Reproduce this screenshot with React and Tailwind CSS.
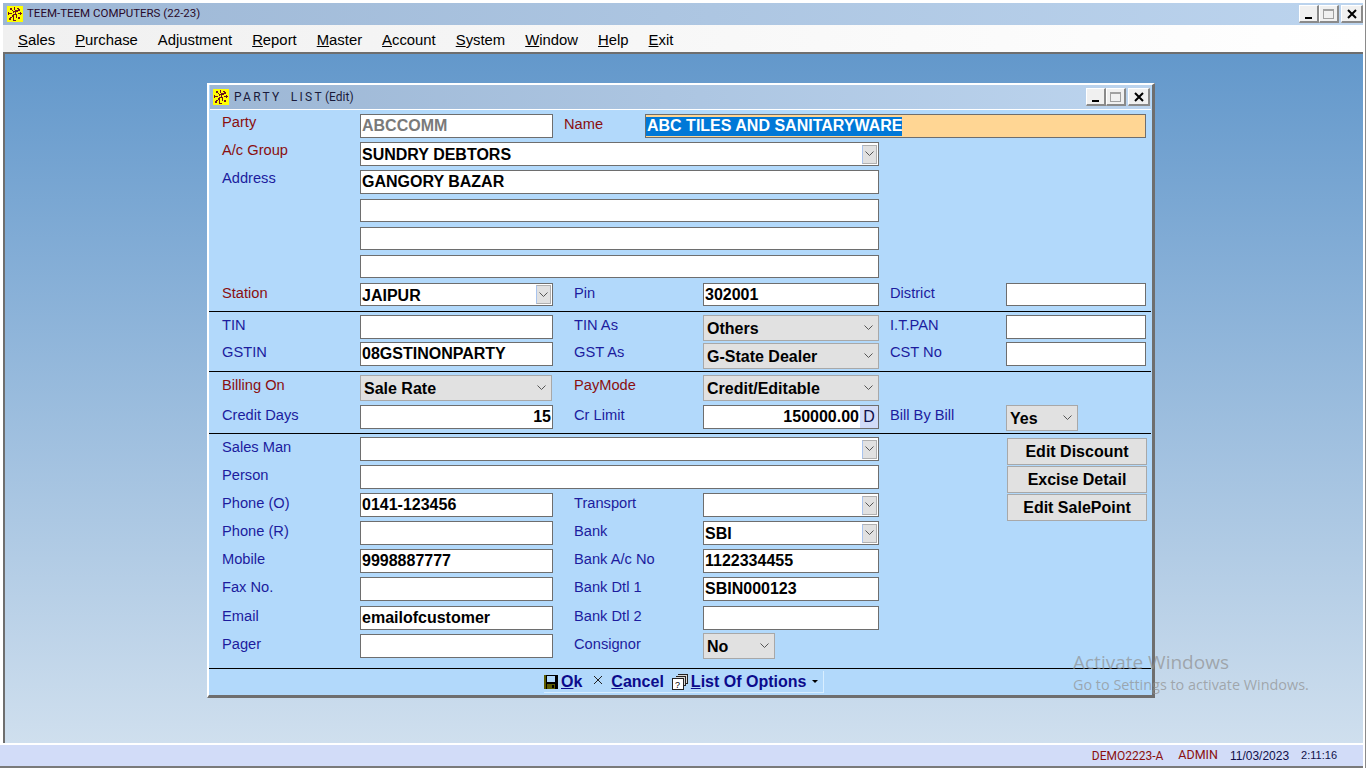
const MENUS = [
  ["S", "ales"], ["P", "urchase"], ["", "Adjustment"], ["R", "eport"], ["M", "aster"],
  ["A", "ccount"], ["S", "ystem"], ["W", "indow"], ["H", "elp"], ["E", "xit"],
];

const BLUE = "text-[#1c1c9e]";
const RED = "text-[#8a0f0f]";

function AppIcon() {
  return (
    <svg width="16" height="16" viewBox="0 0 16 16" className="shrink-0" shapeRendering="crispEdges">
      <rect width="16" height="16" fill="#ffff00" />
      <path
        d="M7 1h1v3H7zM3 2h2v2H3zM10 2h2v1h-2zM11 3h2v2h-2zM5 4h1v1H5zM8 4h3v1H8zM6 5h1v2H6zM9 5h2v1H9zM1 7h4v1H1zM1 6h1v3H1zM11 7h4v1h-4zM13 6h1v3h-1zM6 8h4v1H6zM5 9h2v2H5zM9 9h1v3H9zM3 11h2v1H3zM2 12h2v2H2zM6 11h1v4H6zM11 11h2v2h-2zM7 14h2v1H7zM7 5h2v1H7zM8 6h1v2H8z"
        fill="#6b1020"
      />
    </svg>
  );
}

function WinButtons() {
  return (
    <div className="flex items-center">
      <div className="w-[20px] h-[18px] bg-[#f0f0f0] border-t border-l border-white border-r-2 border-b-2 border-r-[#8a8a8a] border-b-[#8a8a8a] flex items-end justify-center pb-[2px]">
        <div className="w-[7px] h-[2px] bg-black" />
      </div>
      <div className="w-[20px] h-[18px] bg-[#f0f0f0] border-t border-l border-white border-r-2 border-b-2 border-r-[#8a8a8a] border-b-[#8a8a8a] flex items-center justify-center">
        <div className="w-[11px] h-[10px] border border-[#a0a0a0] border-t-2" />
      </div>
      <div className="ml-[2px] w-[22px] h-[18px] bg-[#f0f0f0] border-t border-l border-white border-r-2 border-b-2 border-r-[#8a8a8a] border-b-[#8a8a8a] flex items-center justify-center">
        <svg width="10" height="10" viewBox="0 0 10 10">
          <path d="M1 1l8 8M9 1l-8 8" stroke="#000" strokeWidth="2" fill="none" />
        </svg>
      </div>
    </div>
  );
}

function Label({ text, red, w, top = "mt-[2px]" }) {
  return (
    <div className={`text-[14.67px] leading-[16px] self-start ${top} ${red ? RED : BLUE} ${w}`}>{text}</div>
  );
}

function Input({ value, w, right, grey }) {
  return (
    <div
      className={`h-full flex items-center border border-[#6e6e6e] bg-white text-[16px] font-bold px-[1px] leading-none whitespace-nowrap ${w} ${right ? "justify-end" : ""} ${grey ? "text-[#7a7a7a]" : "text-black"}`}
    >
      {value}
    </div>
  );
}

function Chevron() {
  return (
    <svg width="9" height="6" viewBox="0 0 9 6" className="shrink-0">
      <path d="M0.5 0.5l4 4 4-4" stroke="#555" strokeWidth="1" fill="none" />
    </svg>
  );
}

// white editable combo with the small button on its right
function Combo({ value, w }) {
  return (
    <div className={`h-full flex items-center justify-between border border-[#6e6e6e] bg-white text-[16px] font-bold pl-[1px] pr-[1px] whitespace-nowrap ${w}`}>
      <span className="block mt-[2px]">{value}</span>
      <div className="w-[15px] h-[19px] bg-[#e1e1e1] border border-[#b0b0b0] border-l-[#a9c4ee] flex items-center justify-center">
        <Chevron />
      </div>
    </div>
  );
}

// grey drop-down list
function Select({ value, w, mt = "" }) {
  return (
    <div className={`h-[26px] flex items-center justify-between border border-[#a8a8a8] bg-[#e1e1e1] text-[16px] font-bold pl-[3px] pr-[5px] whitespace-nowrap ${w} ${mt}`}>
      <span className="block mt-[2px]">{value}</span>
      <Chevron />
    </div>
  );
}

function Row({ h = "h-[24px]", mb = "mb-[4px]", children }) {
  return <div className={`flex ${h} ${mb}`}>{children}</div>;
}

function Rule() {
  return <div className="h-[1px] bg-black mr-[1px]" />;
}

function SideButton({ text }) {
  return (
    <div className="w-[140px] h-[27px] mb-[1px] border border-[#a8a8a8] bg-[#e1e1e1] text-[16px] font-bold flex items-center justify-center">
      {text}
    </div>
  );
}

function Tool({ icon, first, rest, ml = "" }) {
  return (
    <div className={`flex items-center ${ml}`}>
      {icon}
      <span className="text-[16px] font-bold text-[#0b0b8c] ml-[3px]">
        <span className="underline">{first}</span>
        {rest}
      </span>
    </div>
  );
}

const L1 = "w-[138px]";
const L2 = "w-[129px]";
const L3 = "w-[116px]";
const GAP = "w-[21px]";
const GAP2 = "w-[11px]";

export default function App() {
  return (
    <div className="w-[1366px] h-[768px] relative overflow-hidden flex flex-col bg-white border-r border-r-[#8a8a8a] font-['Liberation_Sans',Arial,sans-serif] text-black">
      {/* main title bar */}
      <div className="mt-[3px] ml-[3px] mr-[2px] h-[22px] flex items-center justify-between pl-[4px] bg-gradient-to-r from-[#9db7d5] to-[#bcd4ee]">
        <div className="flex items-center gap-[4px] text-[11.5px] font-['Roboto',sans-serif] text-[#2a0a2a]">
          <AppIcon />
          <span>TEEM-TEEM COMPUTERS (22-23)</span>
        </div>
        <WinButtons />
      </div>

      {/* menu */}
      <div className="h-[27px] ml-[3px] mr-[2px] flex items-center pt-[3px] pl-[15px] gap-[20px] bg-gradient-to-r from-[#f0f0f0] to-white text-[14.85px]">
        {MENUS.map(([u, rest], i) => (
          <span key={i}>
            <span className="underline">{u}</span>
            {rest}
          </span>
        ))}
      </div>

      {/* desktop */}
      <div className="flex-1 mr-[2px] ml-[3px] border-t-2 border-l-2 border-[#6e6e6e] pt-[29px] pl-[202px] bg-gradient-to-b from-[#6398cb] to-[#cfdfee]">
        <div className="w-[948px] h-[615px] border-t-[2px] border-l-[2px] border-white border-r-[3px] border-b-[3px] border-r-[#6e6e6e] border-b-[#6e6e6e] flex flex-col bg-[#b2d9fb]">
          <div className="mx-[1px] h-[25px] flex items-center justify-between pl-[3px] pr-[1px] bg-gradient-to-r from-[#9db7d5] to-[#bcd4ee] border-b border-white">
            <div className="flex items-center font-['Roboto',sans-serif] text-[#1a1a3a]">
              <AppIcon />
              <span className="ml-[5px] text-[12px] tracking-[2.3px] [word-spacing:4px]">PARTY LIST</span>
              <span className="ml-[1px] text-[12px]">(Edit)</span>
            </div>
            <WinButtons />
          </div>

          <div className="pl-[13px] pt-[4px] flex-1 flex flex-col">
            <Row>
              <Label text="Party" red w={L1} top="" />
              <Input value="ABCCOMM" w="w-[193px]" grey />
              <div className="w-[11px]" />
              <Label text="Name" red w="w-[81px]" />
              <div className="h-full w-[501px] border border-[#6e6e6e] bg-[#ffd694] flex items-center text-[16px] font-bold whitespace-nowrap">
                <span className="bg-[#0078d7] text-white h-[19px] leading-[18px] pl-[1px]">ABC TILES AND SANITARYWARE</span>
              </div>
            </Row>
            <Row>
              <Label text="A/c Group" red w={L1} top="" />
              <Combo value="SUNDRY DEBTORS" w="w-[519px]" />
            </Row>
            <Row h="h-[24px]" mb="mb-[5px]">
              <Label text="Address" w={L1} top="" />
              <Input value="GANGORY BAZAR" w="w-[519px]" />
            </Row>
            <Row h="h-[23px]" mb="mb-[5px]">
              <div className={L1} />
              <Input value="" w="w-[519px]" />
            </Row>
            <Row h="h-[23px]" mb="mb-[5px]">
              <div className={L1} />
              <Input value="" w="w-[519px]" />
            </Row>
            <Row h="h-[23px]" mb="mb-[5px]">
              <div className={L1} />
              <Input value="" w="w-[519px]" />
            </Row>
            <Row h="h-[23px]" mb="mb-[5px]">
              <Label text="Station" red w={L1} />
              <Combo value="JAIPUR" w="w-[193px]" />
              <div className={GAP} />
              <Label text="Pin" w={L2} />
              <Input value="302001" w="w-[176px]" />
              <div className={GAP2} />
              <Label text="District" w={L3} />
              <Input value="" w="w-[140px]" />
            </Row>
            <div className="-ml-[13px] mb-[3px]"><Rule /></div>

            <Row mb="mb-[3px]">
              <Label text="TIN" w={L1} />
              <Input value="" w="w-[193px]" />
              <div className={GAP} />
              <Label text="TIN As" w={L2} />
              <Select value="Others" w="w-[176px]" />
              <div className={GAP2} />
              <Label text="I.T.PAN" w={L3} />
              <Input value="" w="w-[140px]" />
            </Row>
            <Row mb="mb-[5px]">
              <Label text="GSTIN" w={L1} />
              <Input value="08GSTINONPARTY" w="w-[193px]" />
              <div className={GAP} />
              <Label text="GST As" w={L2} />
              <Select value="G-State Dealer" w="w-[176px]" mt="mt-[1px]" />
              <div className={GAP2} />
              <Label text="CST No" w={L3} />
              <Input value="" w="w-[140px]" />
            </Row>
            <div className="-ml-[13px] mb-[4px]"><Rule /></div>

            <Row h="h-[25px]" mb="mb-[4px]">
              <Label text="Billing On" red w={L1} top="mt-[1px]" />
              <Select value="Sale Rate" w="w-[192px]" mt="-mt-[1px]" />
              <div className="w-[22px]" />
              <Label text="PayMode" red w={L2} top="mt-[1px]" />
              <Select value="Credit/Editable" w="w-[176px]" mt="-mt-[1px]" />
            </Row>
            <Row mb="mb-[4px]">
              <Label text="Credit Days" w={L1} />
              <Input value="15" w="w-[193px]" right />
              <div className={GAP} />
              <Label text="Cr Limit" w={L2} />
              <div className="h-full w-[176px] border border-[#6e6e6e] bg-white flex items-center justify-end text-[16px] font-bold">
                <span>150000.00</span>
                <span className="ml-[1px] w-[18px] h-full bg-[#d2dcf8] text-center font-normal text-[#10104a] leading-[22px]">D</span>
              </div>
              <div className={GAP2} />
              <Label text="Bill By Bill" w={L3} />
              <Select value="Yes" w="w-[72px]" />
            </Row>
            <div className="-ml-[13px] mb-[3px]"><Rule /></div>

            <div className="flex">
              <div className="w-[657px]">
                <Row h="h-[24px]" mb="mb-[4px]">
                  <Label text="Sales Man" w={L1} />
                  <Combo value="" w="w-[519px]" />
                </Row>
                <Row>
                  <Label text="Person" w={L1} />
                  <Input value="" w="w-[519px]" />
                </Row>
                <Row>
                  <Label text="Phone (O)" w={L1} />
                  <Input value="0141-123456" w="w-[193px]" />
                  <div className={GAP} />
                  <Label text="Transport" w={L2} />
                  <Combo value="" w="w-[176px]" />
                </Row>
                <Row>
                  <Label text="Phone (R)" w={L1} />
                  <Input value="" w="w-[193px]" />
                  <div className={GAP} />
                  <Label text="Bank" w={L2} />
                  <Combo value="SBI" w="w-[176px]" />
                </Row>
                <Row>
                  <Label text="Mobile" w={L1} />
                  <Input value="9998887777" w="w-[193px]" />
                  <div className={GAP} />
                  <Label text="Bank A/c No" w={L2} />
                  <Input value="1122334455" w="w-[176px]" />
                </Row>
                <Row mb="mb-[5px]">
                  <Label text="Fax No." w={L1} />
                  <Input value="" w="w-[193px]" />
                  <div className={GAP} />
                  <Label text="Bank Dtl 1" w={L2} />
                  <Input value="SBIN000123" w="w-[176px]" />
                </Row>
                <Row>
                  <Label text="Email" w={L1} />
                  <Input value="emailofcustomer" w="w-[193px]" />
                  <div className={GAP} />
                  <Label text="Bank Dtl 2" w={L2} />
                  <Input value="" w="w-[176px]" />
                </Row>
                <Row mb="mb-[10px]">
                  <Label text="Pager" w={L1} />
                  <Input value="" w="w-[193px]" />
                  <div className={GAP} />
                  <Label text="Consignor" w={L2} />
                  <Select value="No" w="w-[72px]" mt="-mt-[1px]" />
                </Row>
              </div>
              <div className="ml-[128px] pt-[1px]">
                <SideButton text="Edit Discount" />
                <SideButton text="Excise Detail" />
                <SideButton text="Edit SalePoint" />
              </div>
            </div>

            <div className="-ml-[13px]"><Rule /></div>
            <div className="flex h-[24px] pl-[322px] pt-[2px]">
              <div className="flex items-center h-[22px] pr-[5px] border-r border-b border-[#d8eeff]">
                <Tool
                  icon={
                    <svg width="14" height="14" viewBox="0 0 14 14" shapeRendering="crispEdges">
                      <rect width="14" height="14" fill="#000" />
                      <rect x="0" y="0" width="2" height="14" fill="#5c5c00" />
                      <rect x="3" y="1" width="8" height="6" fill="#b2d9fb" />
                      <rect x="3" y="9" width="8" height="5" fill="#5c5c00" />
                      <rect x="8" y="10" width="2" height="3" fill="#000" />
                    </svg>
                  }
                  first="O"
                  rest="k"
                />
                <Tool
                  ml="ml-[11px]"
                  icon={
                    <svg width="10" height="10" viewBox="0 0 10 10" className="-mt-[3px] mr-[5px]">
                      <path d="M1 1l8 8M9 1l-8 8" stroke="#222" strokeWidth="1" fill="none" />
                    </svg>
                  }
                  first="C"
                  rest="ancel"
                />
                <Tool
                  ml="ml-[8px]"
                  icon={
                    <svg width="16" height="16" viewBox="0 0 16 16" shapeRendering="crispEdges">
                      <path d="M5.5 .5h10v9h-2M3.5 2.5h10v9h-2" fill="#d8d8d8" stroke="#222" />
                      <rect x=".5" y="4.5" width="11" height="11" fill="#fff" stroke="#222" />
                      <text x="3" y="14" fontSize="9" fill="#000">?</text>
                    </svg>
                  }
                  first="L"
                  rest="ist Of Options"
                />
                <div className="ml-[6px] w-0 h-0 border-x-[3px] border-x-transparent border-t-[3px] border-t-black" />
              </div>
            </div>
          </div>
        </div>
      </div>

      {/* status bar */}
      <div className="h-[25px] mr-[2px] border-t-2 border-white border-b-2 border-b-[#7a7a7a] bg-[#d2dcf8] flex items-center justify-end pr-[26px] text-[12px]">
        <span className="text-[#8a0f0f] font-['Roboto',sans-serif]">DEMO2223-A</span>
        <span className="text-[#8a0f0f] ml-[15px] font-['Roboto',sans-serif] text-[12.5px]">ADMIN</span>
        <span className="text-[#10104a] ml-[12px]">11/03/2023</span>
        <span className="text-[#10104a] ml-[12px] text-[11px]">2:11:16</span>
      </div>

      {/* windows activation watermark */}
      <div className="absolute left-[1073px] top-[650px] text-[#8f8f8f]/70 font-['Open_Sans',sans-serif] pointer-events-none">
        <div className="text-[19px] leading-[24px]">Activate Windows</div>
        <div className="text-[14.4px] leading-[20px] mt-[1px]">Go to Settings to activate Windows.</div>
      </div>
    </div>
  );
}
